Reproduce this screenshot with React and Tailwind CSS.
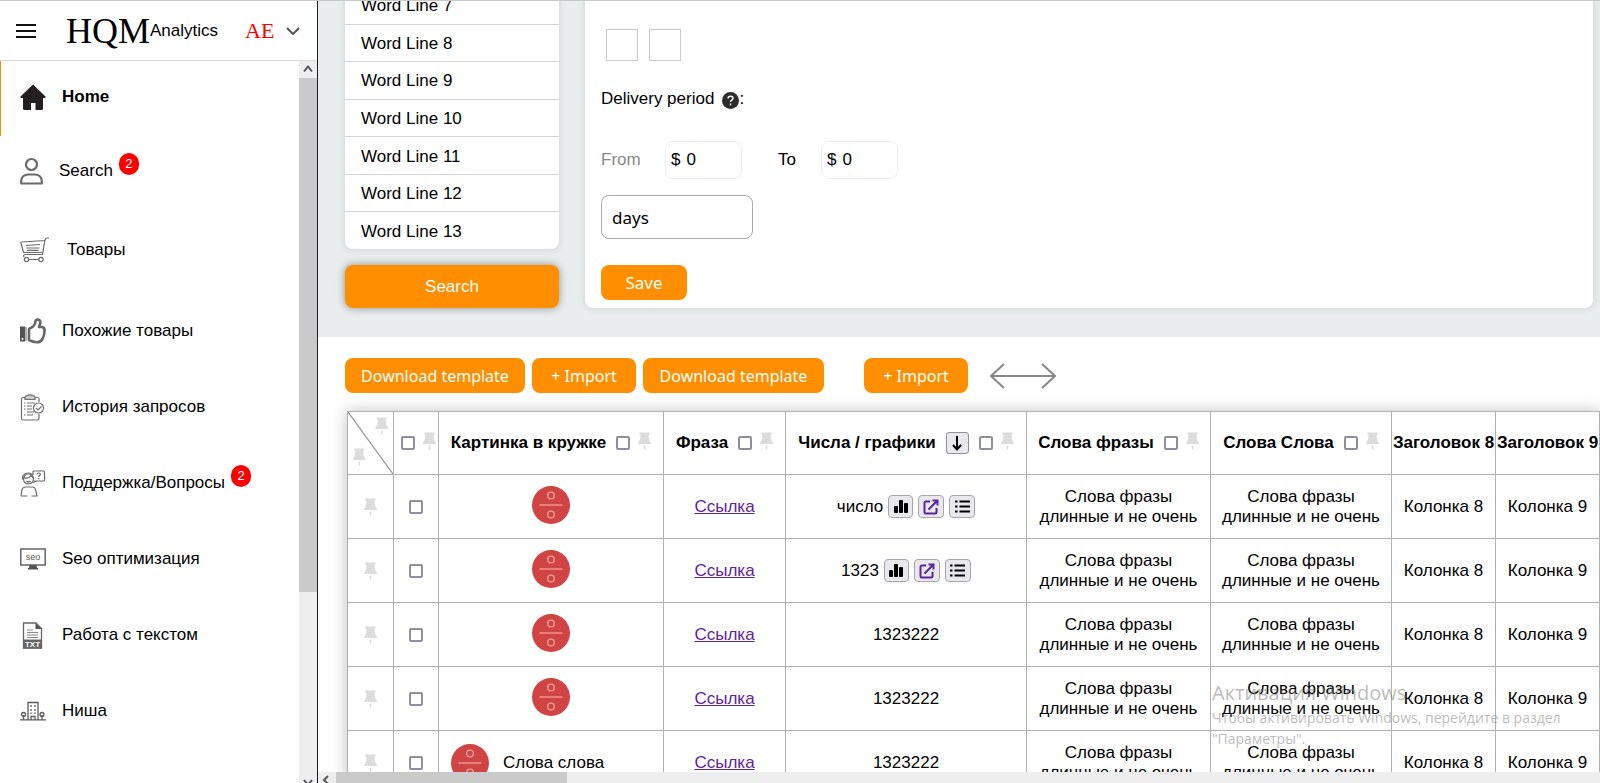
import { useState } from 'react';

const wordLines = [7, 8, 9, 10, 11, 12, 13];

const rows = [
  { id: 1, value: 'число', actions: true },
  { id: 2, value: '1323', actions: true },
  { id: 3, value: '1323222' },
  { id: 4, value: '1323222' },
  { id: 5, value: '1323222', label: 'Слова слова' },
];

const columnWidths = [46, 45, 225, 122, 241, 184, 181, 104, 104];

function HomeIcon() {
  return (
    <svg width="26" height="26" viewBox="0 0 26 26" fill="#231f20">
      <path d="M13 0.5 L25.5 12.5 q0.5 1.5 -1 1.5 H23 V24.5 q0 1.5 -1.5 1.5 H15.5 V19 H11 V26 H4.5 Q3 26 3 24.5 V14 H1.5 Q0 14 0.5 12.5 Z" />
    </svg>
  );
}

function UserIcon() {
  return (
    <svg width="24" height="28" viewBox="0 0 24 28" fill="none" stroke="#6b6b6b" strokeWidth="2.200">
      <circle cx="11.500" cy="7.500" r="5.500" />
      <path d="M1.200 26.500 V24 Q1.500 18 8 17.500 H15 Q21.500 18 21.800 24 V26.500 Z" strokeLinejoin="round" />
    </svg>
  );
}

function CartIcon() {
  return (
    <svg width="30" height="26" viewBox="0 0 30 26" fill="none" stroke="#6b6b6b" strokeWidth="1.200">
      <path d="M29 1 H27 Q25.500 1.200 25 3 L22.500 17.500 H5 M25 3.500 L1.500 5 Q0.800 5.200 1 6 L3.500 15.500 L22.500 15.500 M6 8.500 L20 7.500 M6.500 11 H19.500 M7 13.300 H18.500 M5 17.500 Q3 18 4 20 M8.500 22.500 H18.500" />
      <circle cx="6.500" cy="22.500" r="2.200" />
      <circle cx="21" cy="22.500" r="2.200" />
    </svg>
  );
}

function ThumbIcon() {
  return (
    <svg width="26" height="26" viewBox="0 0 26 26" fill="none" stroke="#666" strokeWidth="2.600">
      <path d="M9 11.500 Q9 10.500 11 9.800 Q15 8 15.300 4 Q15.500 1.500 18 1.500 Q20.500 1.800 20.300 5 L19 9 H22 Q24.700 9.500 24.600 12.500 Q24.500 17 22.500 21 Q20.500 24.300 17 24.300 Q13 24.300 9 22 Z" strokeLinejoin="round" />
      <path d="M0 8.500 H5 V23.500 H0 Z" fill="#555" stroke="none" />
      <path d="M6 9 V23" strokeWidth="1" />
      <circle cx="2.500" cy="21" r="1" fill="#fff" stroke="none" />
    </svg>
  );
}

function HistoryIcon() {
  return (
    <svg width="26" height="27" viewBox="0 0 26 27" fill="none" stroke="#707070" strokeWidth="1.200">
      <path d="M19 8 V5 Q19 3.500 17.500 3.500 H15 M5 3.500 H3 Q1.500 3.500 1.500 5 V24.500 Q1.500 26 3 26 H17.500 Q19 26 19 24 V20" />
      <path d="M5 5.500 V3 Q5 2 7 1.500 Q8 0.800 10 0.800 Q12 0.800 13 1.500 Q15 2 15 3 V5.500 Z" fill="#ccc" />
      <path d="M7 9 H15 M7 12 H12 M7 15 H12 M7 18 H14 M4 9 H5.500 M4 12 H5.500 M4 15 H5.500 M4 21 H5.500 M7 21 H13" strokeWidth="1.200" />
      <circle cx="18.500" cy="14" r="5" fill="#fff" />
      <path d="M16 14 L18 16 L21.500 12.500" />
    </svg>
  );
}

function SupportIcon() {
  return (
    <svg width="26" height="27" viewBox="0 0 26 27" fill="none" stroke="#6b6b6b" strokeWidth="1.200">
      <path d="M1 26 L2 19.500 Q2.500 17.500 5 17 H13 Q15 17.500 15.500 19.500 L17 26 H11.500 M1 26 H7.500" />
      <circle cx="8.500" cy="9" r="5" />
      <path d="M4 8 Q9 9 11 5.500 L13 8 M6.500 11 Q8.500 13 10.500 11 M3.500 9 H2.500 V7 Q4 3 8.500 3 Q11 3 12.500 5" />
      <path d="M13 5 V2 Q13 1 14 1 H23.500 Q24.500 1 24.500 2 V10 Q24.500 11 23.500 11 H16.500 L13.500 12.500 L15 10.500" />
      <path d="M17 4.500 Q17 3 18.700 3 Q20.500 3 20.300 4.500 Q20 5.500 18.700 6.200 V7 M18.700 8 V9.200" />
    </svg>
  );
}

function SeoIcon() {
  return (
    <svg width="26" height="22" viewBox="0 0 26 22">
      <rect x="0.800" y="1" width="24.400" height="16" fill="none" stroke="#666" strokeWidth="1.500" />
      <path d="M9.500 17 H16.500 L17 20 H18 V21.500 H8 V20 H9 Z" fill="#555" />
      <text x="13" y="11.500" textAnchor="middle" fontSize="9" fontFamily="Liberation Sans, sans-serif" fill="#555">seo</text>
    </svg>
  );
}

function TxtIcon() {
  return (
    <svg width="26" height="27" viewBox="0 0 26 27">
      <path d="M3.500 1 H16 L21.500 6.500 V26 H3.500 Z" fill="#fff" stroke="#666" strokeWidth="1.300" />
      <path d="M15.500 1 V7 H21.500 Z" fill="#555" />
      <path d="M7 8 H13 M7 10.500 H18 M7 13 H18 M7 15.500 H18" stroke="#888" strokeWidth="1" />
      <rect x="3" y="17.500" width="19" height="9" fill="#666" />
      <text x="12.500" y="25" textAnchor="middle" fontSize="8" fontWeight="bold" fontFamily="Liberation Sans, sans-serif" fill="#fff">TXT</text>
    </svg>
  );
}

function NicheIcon() {
  return (
    <svg width="26" height="20" viewBox="0 0 26 20" fill="none" stroke="#5c5c5c" strokeWidth="1.300">
      <path d="M0 18.800 H26 M8 18.500 V1.500 H18 V18.500 M11 18.500 V15.500 H15 V18.500 M3.500 18.500 V14 M22 18.500 V14" />
      <path d="M11 4 V6 M15 4 V6 M11 8 V10 M15 8 V10 M11 11.500 V13 M15 11.500 V13" />
      <circle cx="3.500" cy="13.500" r="2" />
      <circle cx="22" cy="13.500" r="2" />
    </svg>
  );
}

function PinIcon() {
  return (
    <svg width="13" height="18" viewBox="0 0 13 18" className="shrink-0" fill="#dcdcdc">
      <path d="M1.500 0.500 H11.500 V3 H10.500 L11 8 Q13 9.500 13 12 H0 Q0 9.500 2 8 L2.500 3 H1.500 Z M5.700 13.500 H7.300 V17.500 H5.700 Z" />
    </svg>
  );
}

function CircleIcon() {
  return (
    <svg width="38" height="38" viewBox="0 0 38 38" className="shrink-0" fill="none" stroke="#eca0a0">
      <circle cx="19" cy="19" r="19" fill="#d04444" stroke="none" />
      <circle cx="19" cy="9.500" r="3.300" strokeWidth="1.300" />
      <circle cx="19" cy="28.500" r="3.300" strokeWidth="1.300" />
      <path d="M7.500 19 H30.500" strokeWidth="1.300" />
    </svg>
  );
}

const menu = [
  { label: 'Search', icon: UserIcon, badge: 2, height: 'h-[70px]', gap: 'gap-[15px]' },
  { label: 'Товары', icon: CartIcon, height: 'h-[87px]', gap: 'gap-[17px]' },
  { label: 'Похожие товары', icon: ThumbIcon, height: 'h-[76px]', gap: 'gap-4' },
  { label: 'История запросов', icon: HistoryIcon, height: 'h-[76px]', gap: 'gap-4' },
  { label: 'Поддержка/Вопросы', icon: SupportIcon, badge: 2, height: 'h-[76px]', gap: 'gap-4' },
  { label: 'Seo оптимизация', icon: SeoIcon, height: 'h-[76px]', gap: 'gap-4' },
  { label: 'Работа с текстом', icon: TxtIcon, height: 'h-[76px]', gap: 'gap-4' },
  { label: 'Ниша', icon: NicheIcon, height: 'h-[76px]', gap: 'gap-4' },
];

function Sidebar() {
  return (
    <aside className="flex w-[318px] shrink-0 flex-col border-r border-[#1c1c24] bg-white">
      <header className="flex h-[60px] shrink-0 items-center border-b border-[#dcdcdc] pl-4">
        <button aria-label="Menu">
          <svg width="20" height="14" viewBox="0 0 20 14" stroke="#111" strokeWidth="2">
            <path d="M0 1 H20 M0 7 H20 M0 13 H20" />
          </svg>
        </button>
        <a href="#" className="ml-[30px] flex items-center">
          <span className="font-['Liberation_Serif',serif] text-[36px] leading-9">HQM</span>
          <span>Analytics</span>
        </a>
        <button className="ml-[27px] flex items-center gap-3 font-['Liberation_Serif',serif] text-[22px] text-[#ff0000]">
          AE
          <svg width="14" height="8" viewBox="0 0 14 8" fill="none" stroke="#555" strokeWidth="2">
            <path d="M1 1 L7 7 L13 1" />
          </svg>
        </button>
      </header>
      <div className="flex min-h-0 flex-1">
        <nav className="flex-1 overflow-hidden">
          <a href="#" className="flex h-[75px] items-center gap-4 border-l border-[#ff8f00] pb-1 pl-[19px] font-bold">
            <HomeIcon />
            Home
          </a>
          {menu.map(({ label, icon: Icon, badge, height, gap }) => (
            <a key={label} href="#" className={`flex items-center pl-5 ${height} ${gap}`}>
              <Icon />
              <span className="flex items-center gap-[6px]">
                {label}
                {badge && (
                  <span className="mb-[14px] flex h-[22px] w-5 items-center justify-center rounded-full bg-[#ff0000] text-[13px] text-white">
                    {badge}
                  </span>
                )}
              </span>
            </a>
          ))}
        </nav>
        <div className="flex w-[18px] flex-col items-center bg-[#eeeeee]">
          <svg width="10" height="17" viewBox="0 0 10 17" className="shrink-0" fill="none" stroke="#555" strokeWidth="2">
            <path d="M1 10.500 L5 5.500 L9 10.500" />
          </svg>
          <div className="h-[514px] w-full shrink-0 bg-[#cacaca]" />
          <svg width="10" height="8" viewBox="0 0 10 8" className="mt-auto -mb-1 shrink-0" fill="none" stroke="#555" strokeWidth="2">
            <path d="M1 1 L5 6 L9 1" />
          </svg>
        </div>
      </div>
    </aside>
  );
}

function MoneyInput({ id, value, onChange }) {
  return (
    <div className="flex h-[38px] w-[77px] items-center gap-[6px] rounded-lg border border-[#eeeeee] px-[5px]">
      <span>$</span>
      <input id={id} type="text" value={value} onChange={(e) => onChange(e.target.value)} className="w-10 outline-none" />
    </div>
  );
}

function Filters() {
  const [from, setFrom] = useState('0');
  const [to, setTo] = useState('0');
  const [unit, setUnit] = useState('days');

  return (
    <section className="flex h-[336px] shrink-0 gap-[26px] overflow-hidden bg-[#e9edee] pr-[7px] pb-[29px] pl-[27px]">
      <div className="flex w-[214px] shrink-0 flex-col justify-end gap-4">
        <ul className="flex h-[262px] shrink-0 flex-col divide-y divide-[#d4d4d4] rounded-lg bg-white shadow-[0_0_8px_rgba(0,0,0,0.12)]">
          {wordLines.map((n) => (
            <li key={n} className="flex flex-1 items-center px-4 pt-[2px]">Word Line {n}</li>
          ))}
        </ul>
        <button className="h-[43px] shrink-0 rounded-lg bg-[#ff8f00] text-white shadow-[0_0_8px_rgba(0,0,0,0.4)]">
          Search
        </button>
      </div>

      <form className="flex flex-1 flex-col items-start justify-end rounded-b-lg bg-white px-4 pb-2 shadow-[0_0_8px_rgba(0,0,0,0.12)]" onSubmit={(e) => e.preventDefault()}>
        <div className="mb-[26px] ml-[5px] flex gap-[11px]">
          <input type="checkbox" aria-label="Option 1" className="size-8 appearance-none border border-[#cccccc]" />
          <input type="checkbox" aria-label="Option 2" className="size-8 appearance-none border border-[#cccccc]" />
        </div>
        <div className="mb-[30px] flex h-6 items-center">
          Delivery period
          <svg width="17" height="17" viewBox="0 0 17 17" className="mt-[2px] ml-2">
            <circle cx="8.500" cy="8.500" r="8.500" fill="#2b2b2b" />
            <path d="M6 6.500 Q6 4.200 8.500 4.200 Q11 4.200 11 6.300 Q11 7.500 9.500 8.300 Q8.500 8.800 8.500 10 M8.500 11.500 V13.200" fill="none" stroke="#fff" strokeWidth="1.500" />
          </svg>
          :
        </div>
        <div className="mb-4 flex items-center">
          <label htmlFor="from" className="w-16 text-[#888888]">From</label>
          <MoneyInput id="from" value={from} onChange={setFrom} />
          <label htmlFor="to" className="ml-9 w-[43px]">To</label>
          <MoneyInput id="to" value={to} onChange={setTo} />
        </div>
        <input
          type="text"
          aria-label="Unit"
          value={unit}
          onChange={(e) => setUnit(e.target.value)}
          className="mb-[26px] h-11 w-[152px] rounded-lg border border-[#aaaaaa] px-[10px] font-['Noto_Sans',sans-serif] outline-none"
        />
        <button className="h-[35px] w-[86px] rounded-lg bg-[#ff8f00] font-['Noto_Sans',sans-serif] text-white">Save</button>
      </form>
    </section>
  );
}

function Toolbar() {
  const button = "h-[35px] rounded-lg bg-[#ff8f00] font-['Noto_Sans',sans-serif] text-[16px] whitespace-nowrap text-white";
  return (
    <div className="flex shrink-0 items-center gap-[7px] pt-[21px] pl-[27px]">
      <button className={`${button} w-[180px]`}>Download template</button>
      <button className={`${button} w-[104px]`}>+ Import</button>
      <button className={`${button} w-[181px]`}>Download template</button>
      <button className={`${button} ml-[33px] w-[104px]`}>+ Import</button>
      <svg width="66" height="28" viewBox="0 0 66 28" className="ml-[15px]" fill="none" stroke="#888" strokeWidth="2">
        <path d="M1 14 H65 M14 2 L1 14 L14 26 M52 2 L65 14 L52 26" />
      </svg>
    </div>
  );
}

function Checkbox({ label }) {
  return (
    <input
      type="checkbox"
      aria-label={label}
      className="block size-[14px] shrink-0 appearance-none rounded-[2px] border-2 border-[#8f8f9d] bg-white checked:bg-[#8f8f9d]"
    />
  );
}

function HeaderCell({ title, sortable }) {
  return (
    <th className="border border-[#b0b0b0] p-0">
      <div className="flex items-center justify-center whitespace-nowrap">
        {title}
        {sortable && (
          <button aria-label="Sort" className="ml-[10px] flex h-[22px] w-[23px] items-center justify-center rounded-[3px] border border-[#8f8f9d] bg-[#e9e9ed]">
            <svg width="10" height="15" viewBox="0 0 10 15" fill="none" stroke="#000" strokeWidth="2">
              <path d="M5 0 V14 M1 9 L5 13.500 L9 9" />
            </svg>
          </button>
        )}
        <span className="mr-2 ml-[10px]">
          <Checkbox label={title} />
        </span>
        <span className="mb-1">
          <PinIcon />
        </span>
      </div>
    </th>
  );
}

function RowActions() {
  const button = 'flex h-[23px] items-center justify-center rounded-[4px] border border-[#a5a5b0] bg-[#e9e9ed]';
  return (
    <>
      <button aria-label="Chart" className={`${button} ml-[5px] w-[25px]`}>
        <svg width="14" height="13" viewBox="0 0 14 13" fill="#000">
          <rect x="0" y="6" width="4" height="7" rx="1" />
          <rect x="5" y="0" width="4" height="13" rx="1" />
          <rect x="10" y="3" width="4" height="10" rx="1" />
        </svg>
      </button>
      <a href="#" aria-label="Open" className={`${button} ml-[5px] w-[26px]`}>
        <svg width="16" height="16" viewBox="0 0 16 16" fill="none" stroke="#5b259f" strokeWidth="2">
          <path d="M7 2.500 H3 Q1.500 2.500 1.500 4 V13 Q1.500 14.500 3 14.500 H12 Q13.500 14.500 13.500 13 V9 M5.500 10.500 L14 2 M9.500 1.500 H14.500 V6.500" />
        </svg>
      </a>
      <button aria-label="List" className={`${button} ml-[5px] w-[26px]`}>
        <svg width="15" height="13" viewBox="0 0 15 13" stroke="#000" strokeWidth="2">
          <path d="M0 1.500 H2.500 M4.500 1.500 H15 M0 6.500 H2.500 M4.500 6.500 H15 M0 11.500 H2.500 M4.500 11.500 H15" />
        </svg>
      </button>
    </>
  );
}

function ProductsTable() {
  const cell = 'border border-[#b0b0b0] p-0 text-center';
  return (
    <div className="min-h-0 flex-1 overflow-hidden pt-[18px] pl-[29px]">
      <table className="w-full table-fixed border-collapse bg-white leading-5 shadow-[0_0_14px_rgba(0,0,0,0.25)]">
        <colgroup>
          {columnWidths.map((width, i) => (
            <col key={i} style={{ width }} />
          ))}
        </colgroup>
        <thead>
          <tr className="h-[63px]">
            <th className="border border-[#b0b0b0] p-0">
              <svg width="100%" height="62" viewBox="0 0 46 62" preserveAspectRatio="none" className="block">
                <path d="M0 0 L46 62" stroke="#999" strokeWidth="1.300" />
                <path transform="translate(28 5)" fill="#dcdcdc" d="M1.500 0.500 H11.500 V3 H10.500 L11 8 Q13 9.500 13 12 H0 Q0 9.500 2 8 L2.500 3 H1.500 Z M5.700 13.500 H7.300 V17.500 H5.700 Z" />
                <path transform="translate(5 36)" fill="#dcdcdc" d="M1.500 0.500 H11.500 V3 H10.500 L11 8 Q13 9.500 13 12 H0 Q0 9.500 2 8 L2.500 3 H1.500 Z M5.700 13.500 H7.300 V17.500 H5.700 Z" />
              </svg>
            </th>
            <th className="border border-[#b0b0b0] p-0">
              <div className="flex items-center gap-2 pl-[7px]">
                <Checkbox label="Выбрать все" />
                <span className="mb-1">
                  <PinIcon />
                </span>
              </div>
            </th>
            <HeaderCell title="Картинка в кружке" />
            <HeaderCell title="Фраза" />
            <HeaderCell title="Числа / графики" sortable />
            <HeaderCell title="Слова фразы" />
            <HeaderCell title="Слова Слова" />
            <th className="border border-[#b0b0b0] p-0 whitespace-nowrap">Заголовок 8</th>
            <th className="border border-[#b0b0b0] p-0 whitespace-nowrap">Заголовок 9</th>
          </tr>
        </thead>
        <tbody>
          {rows.map((row) => (
            <tr key={row.id} className="h-16">
              <td className={cell}>
                <div className="flex justify-center">
                  <PinIcon />
                </div>
              </td>
              <td className={cell}>
                <div className="flex justify-center">
                  <Checkbox label={`Строка ${row.id}`} />
                </div>
              </td>
              <td className={cell}>
                {row.label ? (
                  <div className="flex items-center gap-[14px] pl-3">
                    <CircleIcon />
                    {row.label}
                  </div>
                ) : (
                  <div className="flex justify-center pb-1">
                    <CircleIcon />
                  </div>
                )}
              </td>
              <td className={cell}>
                <a href="#" className="text-[#5b259f] underline">Ссылка</a>
              </td>
              <td className={cell}>
                <div className="flex items-center justify-center">
                  {row.value}
                  {row.actions && <RowActions />}
                </div>
              </td>
              <td className={cell}>Слова фразы<br />длинные и не очень</td>
              <td className={cell}>Слова фразы<br />длинные и не очень</td>
              <td className={cell}>Колонка 8</td>
              <td className={cell}>Колонка 9</td>
            </tr>
          ))}
        </tbody>
      </table>
    </div>
  );
}

export default function App() {
  return (
    <div className="relative flex h-screen overflow-hidden border-t border-[#c8c8c8] bg-white font-['Liberation_Sans',Arial,sans-serif] text-[17px] leading-6 text-black">
      <Sidebar />
      <main className="flex min-w-0 flex-1 flex-col">
        <Filters />
        <Toolbar />
        <ProductsTable />
        <div className="flex h-[11px] shrink-0 items-center bg-[#eeeeee]">
          <svg width="18" height="11" viewBox="0 0 18 11" fill="none" stroke="#555" strokeWidth="2">
            <path d="M10 4 L6 8 L10 12" />
          </svg>
          <div className="h-full w-[231px] bg-[#cacaca]" />
        </div>
      </main>
      <div className="pointer-events-none absolute right-[30px] bottom-[34px] w-[358px] font-['Open_Sans',sans-serif] text-[14px] leading-[21px] whitespace-nowrap text-[#777777]/50">
        <div className="text-[20px] leading-7">Активация Windows</div>
        Чтобы активировать Windows, перейдите в раздел
        <br />
        "Параметры".
      </div>
    </div>
  );
}
